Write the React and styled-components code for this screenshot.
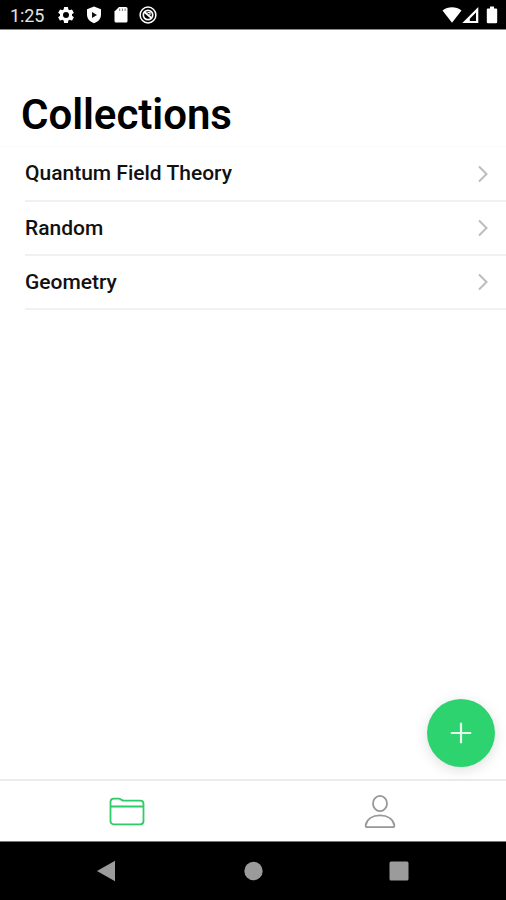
import React from 'react';
import styled, { createGlobalStyle } from 'styled-components';

const GlobalStyle = createGlobalStyle`
  body {
    margin: 0;
    background: #fff;
    font-family: Roboto, 'Liberation Sans', sans-serif;
  }
`;

const Screen = styled.div`
  position: relative;
  display: flex;
  flex-direction: column;
  width: 100%;
  height: 900px;
  overflow: hidden;
  background: #fff;
`;

const StatusBar = styled.header`
  display: flex;
  align-items: center;
  justify-content: space-between;
  box-sizing: border-box;
  height: 30px;
  padding: 1px 8px 0 10px;
  background: #000;
  border-bottom: 1px solid #8b8b8b;
  color: #fff;
`;

const StatusGroup = styled.div`
  display: flex;
  align-items: center;
  gap: ${props => props.gap || 0}px;

  svg {
    display: block;
  }
`;

const Clock = styled.span`
  width: 35px;
  padding-top: 2px;
  font-size: 18px;
  line-height: 20px;
  letter-spacing: -0.1px;
  color: #e4e4e4;
`;

const Title = styled.h1`
  box-sizing: border-box;
  height: 117px;
  margin: 0;
  padding: 60px 0 0 21px;
  border-bottom: 1px solid #fafafa;
  font-size: 42px;
  line-height: 50px;
  font-weight: 600;
  letter-spacing: -0.05px;
  color: #000;
`;

const List = styled.ul`
  flex: 1;
  margin: 0;
  padding: 0 0 0 25px;
  list-style: none;
`;

const Row = styled.li`
  display: flex;
  align-items: center;
  justify-content: space-between;
  box-sizing: border-box;
  height: ${props => (props.$first ? 55 : 54)}px;
  padding-right: 17px;
  border-bottom: 2px solid #f1f1f1;
  font-size: 21px;
  line-height: 24px;
  font-weight: 500;
  color: #111;
`;

const Name = styled.span`
  padding-bottom: 1px;
`;

const TabBar = styled.nav`
  display: flex;
  box-sizing: border-box;
  height: 62px;
  border-top: 2px solid #ebebeb;
`;

const Tab = styled.div`
  display: flex;
  flex: 1;
  align-items: center;
  justify-content: center;
  padding: 1px 0 0 ${props => (props.$active ? 1 : 2)}px;
  color: ${props => (props.$active ? '#2dcb69' : '#979797')};
`;

const SystemNav = styled.footer`
  display: flex;
  align-items: center;
  justify-content: space-between;
  box-sizing: border-box;
  height: 59px;
  padding: 0 97px 0 96px;
  background: #000;
  border-top: 1px solid #777;
`;

const AddButton = styled.button`
  position: absolute;
  right: 11px;
  bottom: 133px;
  display: flex;
  align-items: center;
  justify-content: center;
  width: 68px;
  height: 68px;
  padding: 0;
  border: 0;
  border-radius: 50%;
  background: #2dd36f;
  box-shadow: 0 3px 14px rgba(0, 0, 0, 0.13);
`;

const GearIcon = () =>
  <svg width="20" height="20" viewBox="0 0 24 24" fill="#fff">
    <path d="M19.14 12.94c.04-.3.06-.61.06-.94 0-.32-.02-.64-.07-.94l2.03-1.58a.49.49 0 0 0 .12-.61l-1.92-3.32a.49.49 0 0 0-.59-.22l-2.39.96a7 7 0 0 0-1.62-.94l-.36-2.54a.48.48 0 0 0-.48-.41h-3.84a.48.48 0 0 0-.47.41l-.36 2.54c-.59.24-1.13.57-1.62.94l-2.39-.96a.48.48 0 0 0-.59.22L2.74 8.87a.48.48 0 0 0 .12.61l2.03 1.58a6 6 0 0 0-.02 1.88l-2.03 1.58a.49.49 0 0 0-.12.61l1.92 3.32c.12.22.37.29.59.22l2.39-.96c.5.38 1.03.7 1.62.94l.36 2.54c.05.24.24.41.48.41h3.84c.24 0 .44-.17.47-.41l.36-2.54a7 7 0 0 0 1.62-.94l2.39.96c.22.08.47 0 .59-.22l1.92-3.32a.48.48 0 0 0-.12-.61zM12 15.6a3.6 3.6 0 1 1 0-7.2 3.6 3.6 0 0 1 0 7.2z" />
  </svg>;

const ShieldIcon = () =>
  <svg width="16" height="18" viewBox="0 0 16 18">
    <path d="M7 .5 14 3.2V8.5C14 12.7 11.2 15.8 7 17.2 2.800 15.8 0 12.7 0 8.500V3.200Z" fill="#fff" />
    <path d="M5 6 10 9 5 12Z" fill="#111" />
  </svg>;

const CardIcon = () =>
  <svg width="14" height="18" viewBox="0 0 14 18">
    <path d="M5 1H12A1.500 1.500 0 0 1 13.500 2.500V15A1.500 1.500 0 0 1 12 16.500H2A1.500 1.500 0 0 1 .5 15V5.500Z" fill="#fff" />
    <path d="M5.700 2.500V5M8.400 2.500V5M11.100 2.500V5" stroke="#777" />
  </svg>;

const SyncIcon = () =>
  <svg width="18" height="18" viewBox="0 0 18 18" fill="none" stroke="#fff">
    <circle cx="9" cy="9" r="7.900" strokeWidth="1.500" />
    <circle cx="9" cy="9" r="4.700" strokeWidth="1.700" />
    <path d="M5.500 6 12.500 12" strokeWidth="2" />
    <path d="M8.500 6.500H11V9" strokeWidth="1.200" />
  </svg>;

const WifiIcon = () =>
  <svg width="20" height="18" viewBox="0 0 20 18">
    <path d="M.5 4.600C6 .2 14 .2 19.500 4.600L10 16.800Z" fill="#fff" />
  </svg>;

const SignalIcon = () =>
  <svg width="17" height="18" viewBox="0 0 17 18">
    <path d="M16.300 1V17H.3ZM11 9.500 7.800 12.800 7.800 15H14V6.500L11 9.500Z" fill="#fff" fillRule="evenodd" />
  </svg>;

const BatteryIcon = () =>
  <svg width="12" height="18" viewBox="0 0 12 18">
    <path d="M4 .6H8V2.400H10Q11.200 2.400 11.200 3.600V16Q11.200 17.200 10 17.200H2Q.8 17.200 .8 16V3.600Q.8 2.400 2 2.400H4Z" fill="#fff" />
  </svg>;

const Chevron = () =>
  <svg width="12" height="18" viewBox="0 0 12 18" fill="none">
    <path d="M2 1.500 9.500 9 2 16.500" stroke="#bcbcbc" strokeWidth="2" />
  </svg>;

const FolderIcon = () =>
  <svg width="36" height="30" viewBox="0 0 36 30" fill="none" stroke="currentColor" strokeWidth="1.800">
    <path d="M1.500 9V5Q1.500 1.700 4.800 1.700H9.500Q11 1.700 12.300 2.700 13.500 3.700 15 3.700H31.200Q34.500 3.700 34.500 7V24Q34.500 27.300 31.200 27.300H4.800Q1.500 27.300 1.500 24ZM1.500 9.500H34.500" />
  </svg>;

const PersonIcon = () =>
  <svg width="32" height="36" viewBox="0 0 32 36" fill="none" stroke="currentColor" strokeWidth="1.800">
    <ellipse cx="16" cy="9.500" rx="7" ry="7.600" />
    <path d="M3.500 33.200Q1.200 33.200 1.700 31C3 25 8.500 21.300 16 21.300S29 25 30.300 31Q30.800 33.200 28.500 33.200Z" />
  </svg>;

const collections = ['Quantum Field Theory', 'Random', 'Geometry'];

const App = () =>
  <Screen>
    <GlobalStyle />
    <StatusBar>
      <StatusGroup gap={11}>
        <Clock>1:25</Clock>
        <GearIcon />
        <ShieldIcon />
        <CardIcon />
        <SyncIcon />
      </StatusGroup>
      <StatusGroup>
        <WifiIcon />
        <SignalIcon />
        <svg width="7" height="18" />
        <BatteryIcon />
      </StatusGroup>
    </StatusBar>
    <Title>Collections</Title>
    <List>
      {collections.map((name, i) =>
        <Row key={name} $first={i === 0}>
          <Name>{name}</Name>
          <Chevron />
        </Row>
      )}
    </List>
    <TabBar>
      <Tab $active><FolderIcon /></Tab>
      <Tab><PersonIcon /></Tab>
    </TabBar>
    <SystemNav>
      <svg width="20" height="22" viewBox="0 0 20 22">
        <path d="M1 11 19 .8V21.200Z" fill="#9b9b9b" />
      </svg>
      <svg width="20" height="20" viewBox="0 0 20 20">
        <circle cx="10.500" cy="10" r="9.200" fill="#9b9b9b" />
      </svg>
      <svg width="20" height="20" viewBox="0 0 20 20">
        <rect x=".5" y=".5" width="19" height="19" rx="1.500" fill="#9b9b9b" />
      </svg>
    </SystemNav>
    <AddButton aria-label="Add">
      <svg width="22" height="22" viewBox="0 0 22 22">
        <path d="M11 .8V21.200M.8 11H21.200" stroke="#e6ffef" strokeWidth="2.200" />
      </svg>
    </AddButton>
  </Screen>;

export default App;
